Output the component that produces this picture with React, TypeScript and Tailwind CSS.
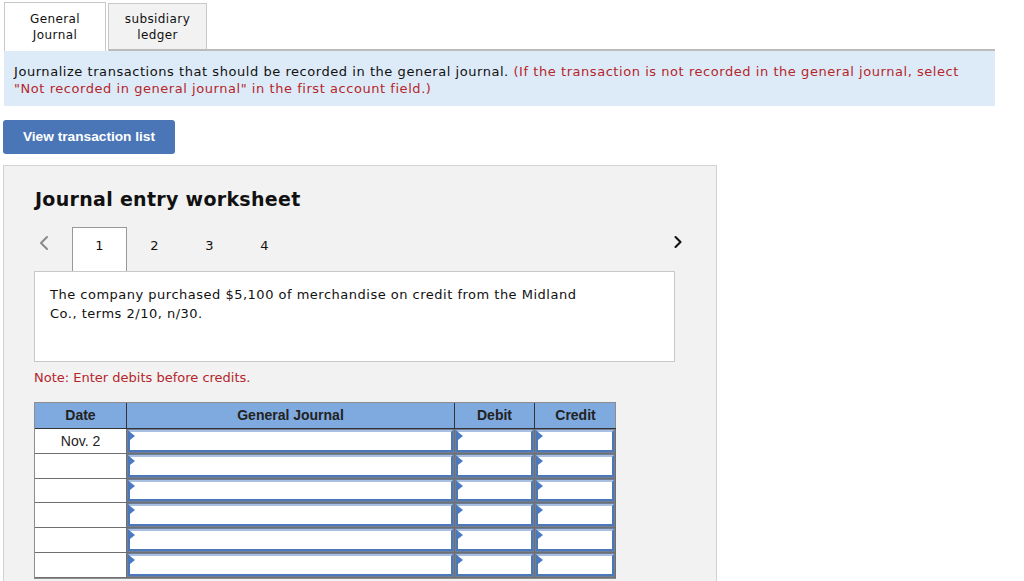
import { ChevronLeft, ChevronRight } from 'lucide-react'

const rows = ['Nov. 2', '', '', '', '', '']
const heights = [25, 25, 24, 25, 25, 25]

function Marker() {
  return <span className="absolute left-0 top-0 h-0 w-0 border-y-[4px] border-l-[5px] border-y-transparent border-l-[#4a7ac4]" />
}

function InputCell() {
  return (
    <div className="border-b border-r border-[#6f6f6f] bg-[#6f7f99] p-px">
      <div className="relative h-full border-2 border-[#4c78b9] border-t-[#aac0e2] bg-white">
        <Marker />
      </div>
    </div>
  )
}

export default function App() {
  return (
    <div className="h-[581px] w-[1024px] overflow-hidden bg-white text-[#111]" style={{ fontFamily: '"DejaVu Sans", Verdana, sans-serif' }}>
      {/* top tabs */}
      <div className="ml-[4px] flex w-[991px] items-end pt-[2px] tracking-[0.4px]">
        <div className="flex h-[49px] w-[102px] items-center justify-center border border-b-0 border-[#c8c8c8] bg-white text-center text-[12px] leading-[16px]">
          General<br />Journal
        </div>
        <div className="ml-[2px] flex h-[48px] w-[99px] items-center justify-center border border-b-2 border-[#c8c8c8] border-b-[#bbb] bg-[#f2f2f2] text-center text-[12px] leading-[16px]">
          subsidiary<br />ledger
        </div>
        <div className="flex-1 border-b-2 border-[#bbb]" />
      </div>
      <div className="ml-[4px] h-[55px] w-[991px] bg-[#ddebf8] px-[10px] pt-[12px] text-[13px] leading-[17px] tracking-[0.55px]">
        Journalize transactions that should be recorded in the general journal.{' '}
        <span className="text-[#b5262a]">(If the transaction is not recorded in the general journal, select<br />"Not recorded in general journal" in the first account field.)</span>
      </div>

      <button className="ml-[3px] mt-[14px] flex h-[34px] w-[172px] items-center justify-center rounded-[3px] bg-[#4a76b7] text-[13.7px] font-bold text-white" style={{ fontFamily: '"Liberation Sans", Arial, sans-serif' }}>
        View transaction list
      </button>

      {/* worksheet */}
      <div className="ml-[3px] mt-[11px] h-[430px] w-[714px] border border-[#d2d2d2] bg-[#f2f2f2] pl-[30px] pt-[21px]">
        <div className="pl-px text-[19px] font-bold leading-[24px] tracking-[0.3px]">Journal entry worksheet</div>

        <div className="mt-[16px] flex h-[44px] w-[640px] items-start">
          <ChevronLeft className="-ml-[2px] mt-[4px] h-[24px] w-[24px] text-[#8a8a8a]" strokeWidth={2} />
          <div className="ml-[16px] flex h-[44px] w-[55px] justify-center border border-b-0 border-[#999] bg-white pt-[8px] text-[13px]">1</div>
          <div className="flex w-[55px] justify-center pt-[9px] text-[13px]">2</div>
          <div className="flex w-[55px] justify-center pt-[9px] text-[13px]">3</div>
          <div className="flex w-[55px] justify-center pt-[9px] text-[13px]">4</div>
          <div className="flex-1" />
          <ChevronRight className="mr-[-14px] mt-[5px] h-[20px] w-[20px] text-[#111]" strokeWidth={2.5} />
        </div>

        <div className="h-[91px] w-[641px] border border-[#c8c8c8] bg-white pl-[15px] pt-[13px] text-[13px] leading-[19px] tracking-[0.5px]">
          The company purchased $5,100 of merchandise on credit from the Midland<br />Co., terms 2/10, n/30.
        </div>

        <div className="mt-[7px] text-[13px] leading-[17px] text-[#b5262a]">Note: Enter debits before credits.</div>

        <div className="mt-[16px] w-[582px] border border-[#8d8d8d]" style={{ fontFamily: '"Liberation Sans", Arial, sans-serif' }}>
          <div className="grid h-[26px] grid-cols-[92px_328px_80px_81px] bg-[#7faadf] text-[14px] font-bold text-[#222]">
            <div className="flex items-center justify-center border-b border-r border-[#333]">Date</div>
            <div className="flex items-center justify-center border-b border-r border-[#333]">General Journal</div>
            <div className="flex items-center justify-center border-b border-r border-[#333]">Debit</div>
            <div className="flex items-center justify-center border-b border-[#333]">Credit</div>
          </div>
          {rows.map((d, i) => (
            <div key={i} className="grid grid-cols-[92px_328px_80px_81px]" style={{ height: heights[i] }}>
              <div className="flex items-center justify-center border-b border-r border-[#6f6f6f] bg-white text-[14px] text-[#222]">{d}</div>
              <InputCell />
              <InputCell />
              <InputCell />
            </div>
          ))}
        </div>
      </div>
    </div>
  )
}
